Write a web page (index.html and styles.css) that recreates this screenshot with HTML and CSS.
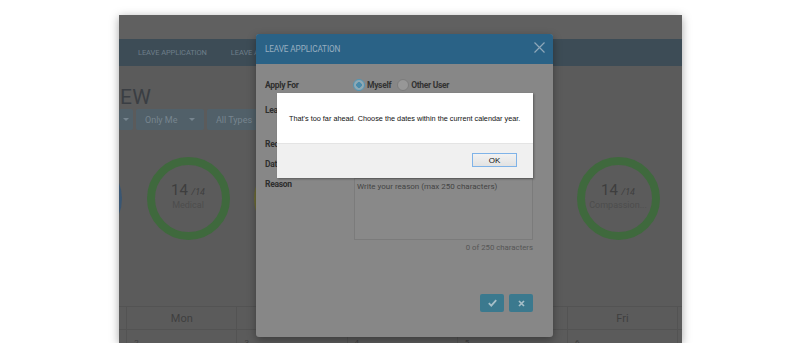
FILE: index.html
```html
<!DOCTYPE html>
<html>
<head>
<meta charset="utf-8">
<title>Leave Application</title>
<link rel="stylesheet" href="styles.css">
</head>
<body>
<div class="frame">
  <div class="topstrip"></div>
  <nav class="nav"><span class="nav-item">LEAVE APPLICATION</span><span class="nav-item">LEAVE APPROVAL</span></nav>
  <h1 class="title">EW</h1>
  <div class="filters">
    <div class="fbtn fbtn-a"><span class="caret"></span></div>
    <div class="fbtn fbtn-b"><span>Only Me</span><span class="caret"></span></div>
    <div class="fbtn fbtn-c"><span>All Types</span></div>
  </div>
  <div class="rings">
    <div class="ring ring-blue"><div class="ring-num">14 <small>/14</small></div><div class="ring-lbl">Annual</div></div>
    <div class="ring ring-green"><div class="ring-num">14 <small>/14</small></div><div class="ring-lbl">Medical</div></div>
    <div class="ring ring-olive"><div class="ring-num">14 <small>/14</small></div><div class="ring-lbl">Hospital</div></div>
    <div class="ring ring-green"><div class="ring-num">14 <small>/14</small></div><div class="ring-lbl">Unpaid</div></div>
    <div class="ring ring-green"><div class="ring-num">14 <small>/14</small></div><div class="ring-lbl">Maternity</div></div>
    <div class="ring ring-green"><div class="ring-num">14 <small>/14</small></div><div class="ring-lbl">Compassion...</div></div>
  </div>
  <div class="cal">
    <div class="cal-head">Sun</div>
    <div class="cal-head">Mon</div>
    <div class="cal-head">Tue</div>
    <div class="cal-head">Wed</div>
    <div class="cal-head">Thu</div>
    <div class="cal-head">Fri</div>
    <div class="cal-head">Sat</div>
    <div class="cal-day">1</div>
    <div class="cal-day">2</div>
    <div class="cal-day">3</div>
    <div class="cal-day">4</div>
    <div class="cal-day">5</div>
    <div class="cal-day">6</div>
    <div class="cal-day">7</div>
  </div>

  <div class="modal">
    <div class="modal-head">
      <span class="modal-title">LEAVE APPLICATION</span>
      <svg class="modal-close" width="11" height="11" viewBox="0 0 11 11"><path d="M0.5 0.5 L10.5 10.5 M10.5 0.5 L0.5 10.5" stroke="#8ea7b9" stroke-width="1.2" fill="none"/></svg>
    </div>
    <div class="modal-body">
      <div class="row row-apply">
        <span class="lbl">Apply For</span>
        <div class="radios">
          <span class="radio radio-on"></span><span class="rtext">Myself</span>
          <span class="radio radio-off"></span><span class="rtext">Other User</span>
        </div>
      </div>
      <div class="row row-leave"><span class="lbl">Leave Type</span></div>
      <div class="row row-req"><span class="lbl">Request</span></div>
      <div class="row row-date"><span class="lbl">Date</span></div>
      <div class="row row-reason">
        <span class="lbl">Reason</span>
        <div class="reason-field">
          <div class="textarea">Write your reason (max 250 characters)</div>
          <div class="counter">0 of 250 characters</div>
        </div>
      </div>
      <div class="actions">
        <div class="act-btn">
          <svg width="9" height="8" viewBox="0 0 9 8"><path d="M0.8 4.2 L3.3 6.6 L8.2 1.2" stroke="#a6bfc8" stroke-width="1.8" fill="none"/></svg>
        </div>
        <div class="act-btn">
          <svg width="7" height="7" viewBox="0 0 7 7"><path d="M1 1 L6 6 M6 1 L1 6" stroke="#a6bfc8" stroke-width="1.7" fill="none"/></svg>
        </div>
      </div>
    </div>
  </div>

  <div class="alert">
    <div class="alert-body">That's too far ahead. Choose the dates within the current calendar year.</div>
    <div class="alert-foot"><div class="ok-btn">OK</div></div>
  </div>
</div>
</body>
</html>
```
FILE: styles.css
```css
html, body {
  margin: 0;
  padding: 0;
  background: #ffffff;
}
body {
  font-family: "Roboto", "Liberation Sans", sans-serif;
}
.frame {
  position: relative;
  margin: 15px 0 0 119px;
  width: 563px;
  height: 328px;
  background: #5b5b5b;
  overflow: hidden;
  box-shadow: 0 2px 9px rgba(0, 0, 0, 0.35);
}
.topstrip {
  height: 24px;
  background: #606060;
}
.nav {
  height: 27px;
  background: #3d4c56;
  display: flex;
  align-items: center;
  padding-left: 19px;
  gap: 24px;
}
.nav-item {
  font-size: 7.5px;
  letter-spacing: -0.1px;
  color: #6d7e8a;
}
.title {
  margin: 19px 0 0 1px;
  height: 25px;
  font-size: 21px;
  line-height: 25px;
  font-weight: normal;
  color: #3a3e43;
  letter-spacing: 0.2px;
}
.filters {
  display: flex;
  gap: 3px;
  height: 21px;
  margin-top: -1px;
}
.fbtn {
  height: 21px;
  background: #516069;
  border-radius: 2px;
  display: flex;
  align-items: center;
  font-size: 9px;
  color: #77858f;
  box-sizing: border-box;
}
.fbtn-a { width: 14px; justify-content: center; }
.fbtn-b { width: 68px; padding: 0 9px; justify-content: space-between; }
.fbtn-c { width: 60px; padding-left: 9px; }
.caret {
  width: 0;
  height: 0;
  border-left: 3px solid transparent;
  border-right: 3px solid transparent;
  border-top: 3px solid #77858f;
}
.rings {
  display: flex;
  gap: 24.5px;
  margin: 27px 0 0 -80px;
}
.ring {
  flex: none;
  width: 83px;
  height: 83px;
  box-sizing: border-box;
  border-radius: 50%;
  border: 8px solid #3f693d;
  display: flex;
  flex-direction: column;
  align-items: center;
  justify-content: center;
}
.ring-blue { border-color: #3a5672; }
.ring-green { border-color: #3f693d; }
.ring-olive { border-color: #6e6d36; }
.ring-num {
  font-size: 15px;
  line-height: 16px;
  color: #3e3e3e;
  margin-top: -4px;
}
.ring-num small {
  font-size: 9px;
  font-style: italic;
}
.ring-lbl {
  font-size: 9px;
  line-height: 11px;
  color: #4d4d4d;
}
.cal {
  display: grid;
  grid-template-columns: repeat(7, 110.2px);
  grid-template-rows: 23px 30px;
  margin: 66px 0 0 -103px;
  border-top: 1px solid #535353;
}
.cal-head {
  border-left: 1px solid #535353;
  border-bottom: 1px solid #535353;
  display: flex;
  align-items: center;
  justify-content: center;
  font-size: 11px;
  padding-top: 1px;
  color: #3f3f3f;
}
.cal-day {
  border-left: 1px solid #535353;
  padding: 8px 0 0 7px;
  font-size: 8px;
  color: #404040;
}

/* modal */
.modal {
  position: absolute;
  left: 137px;
  top: 19px;
  width: 297px;
  height: 303px;
  background: #878787;
  border-radius: 3px;
  box-shadow: 0 3px 8px rgba(0, 0, 0, 0.35);
  overflow: hidden;
}
.modal-head {
  height: 30px;
  background: #2a6286;
  display: flex;
  align-items: center;
  justify-content: space-between;
  padding: 0 9px;
}
.modal-title {
  font-size: 8.2px;
  letter-spacing: -0.1px;
  color: #98afc0;
}
.modal-close { margin-top: -3px; margin-right: -1px; }
.modal-body {
  padding: 14px 20px 0 9px;
}
.row {
  display: grid;
  grid-template-columns: 89px 1fr;
  align-items: center;
}
.lbl {
  font-size: 8.5px;
  font-weight: bold;
  letter-spacing: -0.3px;
  color: #2e2e2e;
}
.row-apply { height: 14px; }
.row-leave { height: 24px; margin-top: 6px; }
.row-req { height: 20px; margin-top: 12px; }
.row-date { height: 20px; }
.row-reason { margin-top: 4px; align-items: start; }
.row-reason .lbl { line-height: 10px; margin-top: 1px; }
.radios {
  display: flex;
  align-items: center;
  margin-left: -1px;
}
.radio {
  width: 12px;
  height: 12px;
  box-sizing: border-box;
  border-radius: 50%;
}
.radio-on {
  border: 1.5px solid #5496b4;
  background: radial-gradient(circle, #4a8bab 0 2.6px, #8fa9b4 3px);
}
.radio-off {
  border: 1.5px solid #7c7c7c;
  background: #979797;
  margin-left: 6px;
}
.rtext {
  font-size: 8.5px;
  font-weight: bold;
  letter-spacing: -0.3px;
  color: #333333;
  margin-left: 2px;
}
.reason-field { display: flex; flex-direction: column; }
.textarea {
  height: 62px;
  box-sizing: border-box;
  border: 1px solid #7b7b7b;
  background: #898989;
  padding: 3px 2px;
  font-size: 8px;
  color: #444444;
}
.counter {
  height: 12px;
  line-height: 12px;
  margin-top: 2px;
  text-align: right;
  font-size: 7.8px;
  color: #565656;
}
.actions {
  display: flex;
  justify-content: flex-end;
  gap: 5px;
  margin-top: 40px;
}
.act-btn {
  width: 24px;
  height: 18px;
  background: #3b798e;
  border-radius: 2px;
  display: flex;
  align-items: center;
  justify-content: center;
}

/* alert */
.alert {
  position: absolute;
  left: 158px;
  top: 78px;
  width: 256px;
  height: 85px;
  background: #ffffff;
  box-shadow: 1px 1px 2px rgba(0, 0, 0, 0.35);
  font-family: "Liberation Sans", Arial, sans-serif;
}
.alert-body {
  height: 50px;
  display: flex;
  align-items: center;
  padding-left: 12px;
  font-size: 7.3px;
  color: #111111;
}
.alert-foot {
  height: 35px;
  background: #f0f0f0;
  border-top: 1px solid #e4e4e4;
  box-sizing: border-box;
  display: flex;
  justify-content: flex-end;
  padding: 9px 16px 0 0;
}
.ok-btn {
  width: 45px;
  height: 14px;
  box-sizing: border-box;
  border: 1px solid #7fb3e8;
  background: linear-gradient(#f2f2f2, #e2e2e2);
  display: flex;
  align-items: center;
  justify-content: center;
  font-size: 8px;
  color: #111111;
}
```
